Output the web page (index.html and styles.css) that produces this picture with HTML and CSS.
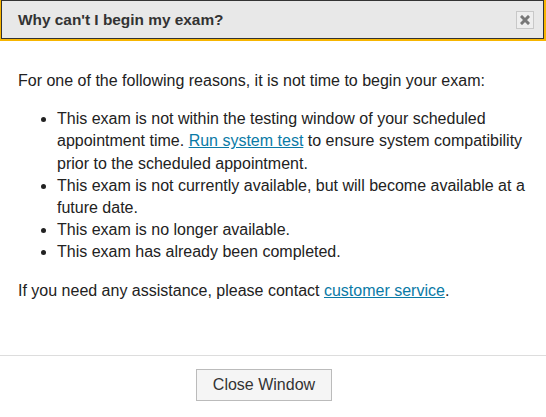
FILE: index.html
```html
<!DOCTYPE html>
<html lang="en">
<head>
  <meta charset="UTF-8" />
  <meta name="viewport" content="width=device-width, initial-scale=1.0"/>
  <title>Why can't I begin my exam?</title>
  <link rel="stylesheet" href="styles.css">
</head>
<body>
  <div class="dialog-header">
    <h2 class="dialog-title">Why can't I begin my exam?</h2>
    <button class="close-x" title="Close">
      <svg width="10" height="10" viewBox="0 0 10 10">
        <path d="M2 2 L8 8 M8 2 L2 8" stroke="#777" stroke-width="3" stroke-linecap="square"/>
      </svg>
    </button>
  </div>

  <!-- Content -->
  <div class="dialog-body">
    <p>For one of the following reasons, it is not time to begin your exam:</p>
    <ul>
      <li>This exam is not within the testing window of your scheduled appointment time. <a href="#">Run system test</a> to ensure system compatibility prior to the scheduled appointment.</li>
      <li>This exam is not currently available, but will become available at a future date.</li>
      <li>This exam is no longer available.</li>
      <li>This exam has already been completed.</li>
    </ul>
    <p>If you need any assistance, please contact <a href="#">customer service</a>.</p>
  </div>

  <div class="dialog-footer">
    <button class="close-btn">Close Window</button>
  </div>
</body>
</html>
```

FILE: styles.css
```css
body {
  margin: 0;
  font-family: "Liberation Sans", Arial, sans-serif;
  color: #222;
  background: #fff;
}

.dialog-header {
  display: flex;
  align-items: center;
  justify-content: space-between;
  height: 37px;
  margin: 0 2px 0 1px;
  padding: 0 9px 0 16px;
  background: #e8e8e8;
  border: 1px solid #333;
  outline: 2px solid #f7b500;
}

.dialog-title {
  margin: 0;
  font-size: 15.4px;
  font-weight: bold;
  color: #333;
}

.close-x {
  display: flex;
  align-items: center;
  justify-content: center;
  width: 18px;
  height: 18px;
  padding: 0;
  background: #eee;
  border: 1px solid #c8c8c8;
  cursor: pointer;
}

.dialog-body {
  padding: 15px 18px 0;
  font-size: 16px;
  line-height: 22.2px;
}

.dialog-body p {
  margin: 16px 0;
}

.dialog-body ul {
  margin: 16px 0;
  padding-left: 39px;
}

.dialog-body a {
  color: #0a7aa6;
}

.dialog-footer {
  margin-top: 53px;
  padding: 13px 0 0 196px;
  border-top: 1px solid #ddd;
}

.close-btn {
  width: 136px;
  height: 32px;
  font-family: "Liberation Sans", Arial, sans-serif;
  font-size: 16px;
  color: #333;
  background: #f5f5f5;
  border: 1px solid #bbb;
  cursor: pointer;
}
```
